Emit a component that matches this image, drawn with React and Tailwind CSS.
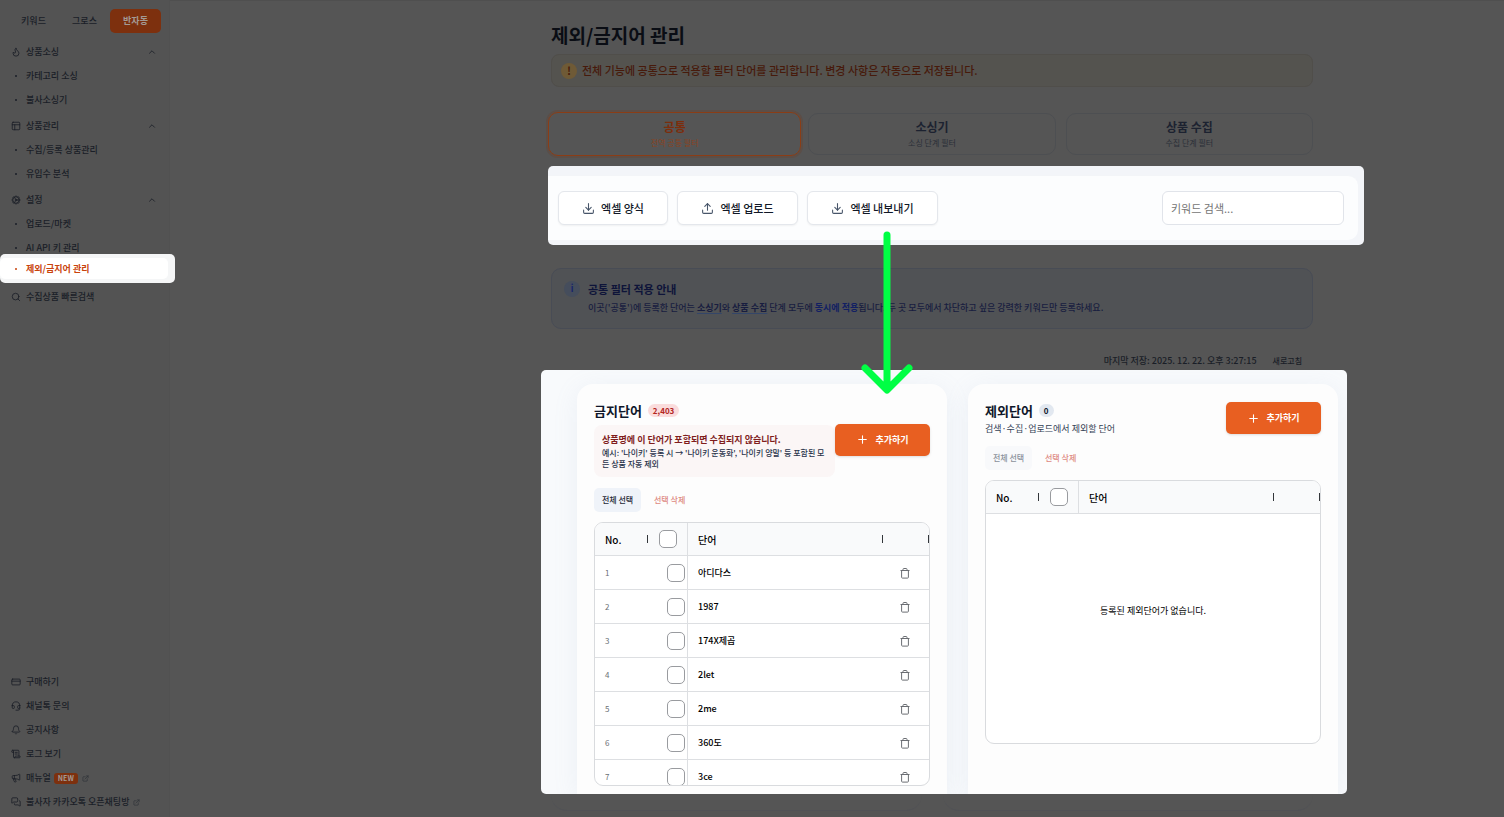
// Import Dependencies
import {
  Bell,
  ChevronUp,
  Cog,
  CreditCard,
  Download,
  ExternalLink,
  Flame,
  Headset,
  Megaphone,
  MessagesSquare,
  PanelsTopLeft,
  Plus,
  ScrollText,
  Search,
  Upload,
} from "lucide-react";
import clsx from "clsx";

// ----------------------------------------------------------------------

const MENU = [
  { title: "상품소싱", icon: Flame, items: ["카테고리 소싱", "불사소싱기"] },
  { title: "상품관리", icon: PanelsTopLeft, items: ["수집/등록 상품관리", "유입수 분석"] },
  { title: "설정", icon: Cog, items: ["업로드/마켓", "AI API 키 관리"] },
];

const FOOTER_LINKS = [
  { label: "구매하기", icon: CreditCard },
  { label: "채널톡 문의", icon: Headset },
  { label: "공지사항", icon: Bell },
  { label: "로그 보기", icon: ScrollText },
  { label: "매뉴얼", icon: Megaphone, isNew: true, external: true },
  { label: "불사자 카카오톡 오픈채팅방", icon: MessagesSquare, external: true },
];

const SCOPES = [
  { label: "공통", desc: "전역 공통 필터", active: true },
  { label: "소싱기", desc: "소싱 단계 필터" },
  { label: "상품 수집", desc: "수집 단계 필터" },
];

const BANNED_WORDS = ["아디다스", "1987", "174X제곱", "2let", "2me", "360도", "3ce"];

// ----------------------------------------------------------------------

function TrashIcon() {
  return (
    <svg viewBox="0 0 12 12" className="size-3" fill="none" stroke="currentColor" strokeWidth="1">
      <path d="M1.5 3.5h9M4 3.5V2.3c0-.5.3-.8.8-.8h2.4c.5 0 .8.3.8.8v1.2M2.6 3.5v6.8c0 .5.3.8.8.8h5.2c.5 0 .8-.3.8-.8V3.5" />
    </svg>
  );
}

function Bullet() {
  return (
    <span className="flex w-[10px] justify-center">
      <span className="size-[2px] rounded-full bg-current" />
    </span>
  );
}

function Sidebar() {
  return (
    <aside className="flex w-[170px] shrink-0 flex-col border-r border-[#515151] bg-[#535353] text-[9px] font-medium text-[#1a1e27]">
      <nav className="flex flex-col">
        <div className="mt-[9px] mb-[7px] ml-2 grid w-[153px] grid-cols-3">
          <button className="h-6 rounded-[5px]">키워드</button>
          <button className="h-6 rounded-[5px]">그로스</button>
          <button className="h-6 rounded-[5px] bg-[#7d300e] font-bold text-[#a39a95]">반자동</button>
        </div>

        {MENU.map(({ title, icon: Icon, items }) => (
          <div key={title} className="mb-[2px] flex flex-col">
            <button className="flex h-6 items-center gap-[5px] pr-[12px] pl-[11px]">
              <Icon className="size-[10px]" strokeWidth={2} />
              {title}
              <ChevronUp className="ml-auto size-[10px]" />
            </button>
            {items.map((item) => (
              <a key={item} href="#" className="flex h-6 items-center gap-[5px] pl-[11px]">
                <Bullet />
                {item}
              </a>
            ))}
          </div>
        ))}

        {/* Current page */}
        <div className="relative -mt-[8px] -mr-[6px] rounded-[5px] bg-[#f5f6f7] py-[4px] pr-[7px]">
          <a href="#" className="flex h-[21px] items-center gap-[5px] rounded-[5px] bg-white pl-[11px] font-bold text-[#c9430d]">
            <Bullet />
            제외/금지어 관리
          </a>
        </div>

        <a href="#" className="mt-[2px] flex h-6 items-center gap-[5px] pl-[11px]">
          <Search className="size-[10px]" />
          수집상품 빠른검색
        </a>
      </nav>

      <div className="mt-auto flex flex-col pb-[3px]">
        {FOOTER_LINKS.map(({ label, icon: Icon, isNew, external }) => (
          <a key={label} href="#" className="flex h-6 items-center pl-[11px]">
            <Icon className="mr-[5px] size-[10px]" />
            {label}
            {isNew && (
              <span className="ml-[3px] flex h-[11px] items-center rounded-[3px] bg-[#7d300e] px-1 text-[7px] font-bold text-[#a39a95]">
                NEW
              </span>
            )}
            {external && <ExternalLink className="ml-1 size-[7px] text-[#2a2e36]" />}
          </a>
        ))}
      </div>
    </aside>
  );
}

function ScopeTabs() {
  return (
    <div className="mt-[25px] grid h-11 grid-cols-3 items-center gap-[10px]">
      {SCOPES.map(({ label, desc, active }) => (
        <button
          key={label}
          className={clsx(
            "flex flex-col items-center justify-center rounded-[10px] border",
            active
              ? "-mx-[3px] h-11 border-[#8a3d16] text-[#7c2d0c] shadow-[0_0_0_2px_#5c4e47]"
              : "h-[42px] border-[#4d4f52] text-[#1c2230]"
          )}
        >
          <span className="text-[12px] leading-[18px] font-bold">{label}</span>
          <span className={clsx("text-[8px] leading-[14px]", active ? "text-[#8a431f]" : "text-[#2a2e37]")}>
            {desc}
          </span>
        </button>
      ))}
    </div>
  );
}

function Toolbar() {
  const button =
    "flex h-[34px] items-center justify-center gap-[6px] rounded-[6px] border border-[#e4e7ec] bg-white text-[11px] font-medium text-[#111827] shadow-xs";

  return (
    <div className="relative z-10 mt-[10px] ml-[7px] rounded-[5px] bg-[#f3f5f9] pt-[9px] pr-[6px] pb-[5px]">
      <div className="flex items-center gap-[9px] rounded-r-[10px] border-t border-[#f3f5f8] bg-[#fcfdfe] py-[15px] pr-[14px] pl-[10px]">
        <button className={clsx(button, "w-[110px]")}>
          <Download className="size-[13px] text-[#475569]" />
          엑셀 양식
        </button>
        <button className={clsx(button, "w-[121px]")}>
          <Upload className="size-[13px] text-[#475569]" />
          엑셀 업로드
        </button>
        <button className={clsx(button, "w-[131px]")}>
          <Download className="size-[13px] text-[#475569]" />
          엑셀 내보내기
        </button>
        <input
          type="text"
          aria-label="키워드 검색"
          placeholder="키워드 검색..."
          className="ml-auto h-[34px] w-[182px] rounded-[6px] border border-[#e1e4ea] bg-white px-2 text-[11px] placeholder:text-[#757575]"
        />
      </div>

      {/* Guide arrow from the export button down to the word lists */}
      <svg
        className="pointer-events-none absolute top-[65px] left-[313px] h-[164px] w-[52px]"
        viewBox="0 0 52 164"
        fill="none"
        stroke="#00ff44"
        strokeWidth="7"
        strokeLinecap="round"
        strokeLinejoin="round"
      >
        <path d="M26 4v154M4 137l22 22 22-22" />
      </svg>
    </div>
  );
}

function CommonNotice() {
  return (
    <div className="mt-[23px] mr-[51px] ml-[10px] flex h-[61px] gap-2 rounded-[10px] border border-[#484c55] bg-[#505255] pt-[12px] pl-[12px]">
      <span className="flex size-4 shrink-0 items-center justify-center rounded-full bg-[#454d5c] text-[9px] font-bold text-[#17246b]">
        i
      </span>
      <div>
        <h2 className="text-[11px] leading-[17px] font-bold text-[#0e1439]">공통 필터 적용 안내</h2>
        <p className="mt-[2px] text-[9px] leading-4 font-medium text-[#181d3f]">
          이곳('공통')에 등록한 단어는{" "}
          <b className="underline decoration-[#344669] underline-offset-2">소싱기</b>와{" "}
          <b className="underline decoration-[#344669] underline-offset-2">상품 수집</b> 단계 모두에{" "}
          <b className="text-[#121f63]">동시에 적용</b>됩니다. 두 곳 모두에서 차단하고 싶은 강력한 키워드만 등록하세요.
        </p>
      </div>
    </div>
  );
}

function AddButton() {
  return (
    <button className="flex h-8 w-[95px] shrink-0 items-center justify-center gap-[6px] rounded-[5px] bg-[#e85f21] text-[9px] font-bold text-white shadow-sm">
      <Plus className="size-[13px]" strokeWidth={2} />
      추가하기
    </button>
  );
}

function ListActions({ disabled }) {
  return (
    <div className="mt-[11px] flex h-6 items-center gap-[5px] text-[8px]">
      <button
        disabled={disabled}
        className={clsx(
          "h-6 w-[47px] rounded-[5px] font-medium",
          disabled ? "bg-[#f8f9fb] text-[#8b919b]" : "bg-[#eff3f9] text-[#1f2937]"
        )}
      >
        전체 선택
      </button>
      <button disabled className="h-6 px-2 font-medium text-[#dd8a83]">
        선택 삭제
      </button>
    </div>
  );
}

function Checkbox({ label }) {
  return (
    <input
      type="checkbox"
      aria-label={label}
      className="block size-[18px] appearance-none rounded-[5px] border border-[#999b9f] bg-white"
    />
  );
}

function WordTable({ name, rows = [], emptyText }) {
  return (
    <div className="mt-[10px] flex h-[264px] flex-col overflow-hidden rounded-[9px] border border-[#d9dbde] bg-white text-[9px]">
      <table className="w-full table-fixed border-separate border-spacing-0 text-left">
        <thead>
          <tr className="h-[33px] bg-[#f9fafb] text-[10px] text-black">
            <th className="w-[53px] border-b border-[#dddfe2] p-0 font-medium">
              <div className="flex items-center justify-between pl-[10px]">
                No.
                <span className="h-2 w-px bg-[#33363a]" />
              </div>
            </th>
            <th className="w-[40px] border-r border-b border-[#dddfe2] p-0">
              <div className="flex justify-center">
                <Checkbox label={`${name} 전체`} />
              </div>
            </th>
            <th className="border-b border-[#dddfe2] p-0 font-medium">
              <div className="flex items-center justify-between pl-[10px]">
                단어
                <span className="h-2 w-px bg-[#33363a]" />
              </div>
            </th>
            <th className="w-[46px] border-b border-[#dddfe2] p-0">
              <div className="ml-auto h-2 w-px bg-[#33363a]" />
            </th>
          </tr>
        </thead>
        <tbody>
          {rows.map((word, i) => (
            <tr key={word} className="h-[34px]">
              <td className="border-b border-[#dddfe2] p-0 pl-[10px] text-[8px] text-[#6b6f75]">{i + 1}</td>
              <td className="border-r border-b border-[#dddfe2] p-0">
                <div className="flex justify-end pr-[2px]">
                  <Checkbox label={word} />
                </div>
              </td>
              <td className="border-b border-[#dddfe2] p-0 pl-[10px] font-medium text-black">{word}</td>
              <td className="border-b border-[#dddfe2] p-0">
                <button aria-label={`${word} 삭제`} className="ml-4 block text-[#6b6e73]">
                  <TrashIcon />
                </button>
              </td>
            </tr>
          ))}
        </tbody>
      </table>
      {emptyText && (
        <p className="flex flex-1 items-center justify-center pb-9 text-black">{emptyText}</p>
      )}
    </div>
  );
}

function WordLists() {
  const card =
    "rounded-t-[16px] bg-[#fdfdfd] px-[17px] pt-[18px] pb-2 shadow-[0_4px_24px_rgba(148,163,200,0.12)]";

  return (
    <div className="relative mr-[17px] grid grid-cols-2 gap-[21px] overflow-hidden rounded-[5px] bg-[#f8fafc] pt-[14px] pr-[9px] pl-[36px]">
      <section className={card}>
        <div className="flex items-center">
          <div className="min-w-0 flex-1">
            <div className="flex h-[17px] items-center gap-[6px]">
              <h2 className="text-[13px] font-bold text-[#0f172a]">금지단어</h2>
              <span className="flex h-[13px] items-center rounded-full bg-[#fadcdc] px-[5px] text-[8px] font-bold text-[#b3261e]">
                2,403
              </span>
            </div>
            <div className="mt-[6px] h-[52px] rounded-[8px] bg-[#fbf6f6] px-2 pt-2">
              <p className="text-[9px] leading-[14px] font-bold text-[#7f1d1d]">
                상품명에 이 단어가 포함되면 수집되지 않습니다.
              </p>
              <p className="text-[8px] leading-[11px] font-medium break-all text-[#28324a]">
                예시: '나이키' 등록 시 → '나이키 운동화', '나이키 양말' 등 포함된 모든 상품 자동 제외
              </p>
            </div>
          </div>
          <AddButton />
        </div>
        <ListActions />
        <WordTable name="금지단어" rows={BANNED_WORDS} />
      </section>

      <section className={card}>
        <div className="flex items-start justify-between">
          <div>
            <div className="flex h-[17px] items-center gap-[6px]">
              <h2 className="text-[13px] font-bold text-[#0f172a]">제외단어</h2>
              <span className="flex h-[13px] items-center rounded-full bg-[#e2e8f0] px-[5px] text-[8px] font-bold text-[#0f172a]">
                0
              </span>
            </div>
            <p className="mt-[3px] text-[9px] leading-[13px] text-[#334155]">검색·수집·업로드에서 제외할 단어</p>
          </div>
          <AddButton />
        </div>
        <ListActions disabled />
        <WordTable name="제외단어" emptyText="등록된 제외단어가 없습니다." />
      </section>
    </div>
  );
}

export default function App() {
  return (
    <div className="flex min-h-screen bg-[#555555] font-['Noto_Sans_CJK_KR','Noto_Sans_CJK_SC',sans-serif]">
      <Sidebar />
      <main className="min-w-0 flex-1 border-t border-[#4f4f4f] pr-[140px] pl-[371px]">
        <div className="mr-[51px] ml-[10px] pt-[21px]">
          <h1 className="text-[19px] leading-[26px] font-bold text-[#0a0d14]">제외/금지어 관리</h1>
          <div className="mt-[6px] flex h-[33px] items-center gap-[5px] rounded-[8px] border border-[#504e4a] bg-[#54534f] pl-[9px] text-[11px] font-medium text-[#471a0b]">
            <span className="flex size-4 items-center justify-center rounded-full bg-[#6f5a36] font-bold">!</span>
            전체 기능에 공통으로 적용할 필터 단어를 관리합니다. 변경 사항은 자동으로 저장됩니다.
          </div>
          <ScopeTabs />
        </div>

        <Toolbar />
        <CommonNotice />

        <div className="mt-[22px] mr-[51px] flex h-[19px] items-center justify-end gap-4 pr-[11px] text-[#1a1e27]">
          <span className="text-[9px] font-medium">마지막 저장: 2025. 12. 22. 오후 3:27:15</span>
          <button className="text-[8px] font-medium">새로고침</button>
        </div>

        <WordLists />

        {/* Lower edge of the cards */}
        <div className="mr-[51px] ml-[10px] grid grid-cols-2 gap-[21px]">
          <div className="h-[17px] rounded-b-[16px] border-b border-[#515256]" />
          <div className="h-[17px] rounded-b-[16px] border-b border-[#515256]" />
        </div>
      </main>
    </div>
  );
}
